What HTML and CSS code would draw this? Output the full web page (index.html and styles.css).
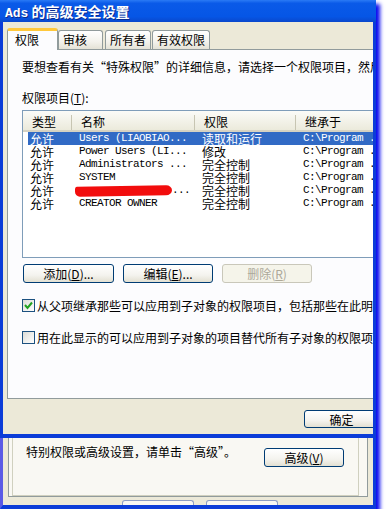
FILE: index.html
```html
<!DOCTYPE html>
<html lang="zh-CN">
<head>
    <meta charset="UTF-8">
    <title>Ads 的高级安全设置</title>
    <link rel="stylesheet" href="styles.css">
</head>
<body>
    <div class="screen">
        <div class="dialog">
            <div class="titlebar"><span class="title-en">Ads</span> 的高级安全设置</div>
            <div class="dialog-body">
                <div class="tabs">
                    <div class="tab active">权限</div>
                    <div class="tab">审核</div>
                    <div class="tab tab-gap2">所有者</div>
                    <div class="tab tab-gap1">有效权限</div>
                </div>
                <div class="panel">
                    <p class="intro">要想查看有关“特殊权限”的详细信息，请选择一个权限项目，然后单击“编辑”。</p>
                    <p class="label">权限项目(<u>T</u>):</p>

                    <div class="listview">
                        <div class="lv-head">
                            <div class="hcell">类型</div>
                            <div class="hcell">名称</div>
                            <div class="hcell">权限</div>
                            <div class="hcell">继承于</div>
                        </div>
                        <div class="lv-row selected">
                            <div class="cell">允许</div>
                            <div class="cell mono">Users (LIAOBIAO...</div>
                            <div class="cell">读取和运行</div>
                            <div class="cell mono">C:\Program ...</div>
                        </div>
                        <div class="lv-row">
                            <div class="cell">允许</div>
                            <div class="cell mono">Power Users (LI...</div>
                            <div class="cell">修改</div>
                            <div class="cell mono">C:\Program ...</div>
                        </div>
                        <div class="lv-row">
                            <div class="cell">允许</div>
                            <div class="cell mono">Administrators ...</div>
                            <div class="cell">完全控制</div>
                            <div class="cell mono">C:\Program ...</div>
                        </div>
                        <div class="lv-row">
                            <div class="cell">允许</div>
                            <div class="cell mono">SYSTEM</div>
                            <div class="cell">完全控制</div>
                            <div class="cell mono">C:\Program ...</div>
                        </div>
                        <div class="lv-row">
                            <div class="cell">允许</div>
                            <div class="cell mono scribbled"><span class="scribble"></span>...</div>
                            <div class="cell">完全控制</div>
                            <div class="cell mono">C:\Program ...</div>
                        </div>
                        <div class="lv-row">
                            <div class="cell">允许</div>
                            <div class="cell mono">CREATOR OWNER</div>
                            <div class="cell">完全控制</div>
                            <div class="cell mono">C:\Program ...</div>
                        </div>
                    </div>

                    <div class="btn-row">
                        <button class="btn">添加(<u>D</u>)...</button>
                        <button class="btn">编辑(<u>E</u>)...</button>
                        <button class="btn" disabled>删除(<u>R</u>)</button>
                    </div>

                    <label class="check first">
                        <span class="box"><svg width="11" height="11" viewBox="0 0 11 11"><polyline points="2,5 4.5,8 9,2.5" fill="none" stroke="#21a121" stroke-width="2"/></svg></span>
                        从父项继承那些可以应用到子对象的权限项目，包括那些在此明确定义的项目。
                    </label>
                    <label class="check second">
                        <span class="box"></span>
                        用在此显示的可以应用到子对象的项目替代所有子对象的权限项目。
                    </label>
                </div>
                <div class="footer">
                    <button class="btn btn-ok">确定</button>
                </div>
            </div>
        </div>

        <div class="under">
            <div class="under-panel">
                <div class="group">
                    <span>特别权限或高级设置，请单击“高级”。</span>
                    <button class="btn btn-adv">高级(<u>V</u>)</button>
                </div>
            </div>
            <div class="under-btns">
                <span></span>
                <span></span>
            </div>
        </div>
    </div>
</body>
</html>
```

FILE: styles.css
```css
body {
    margin: 0;
    background: #fff;
    font-family: "Noto Sans CJK SC", sans-serif;
    font-size: 12px;
    line-height: 14px;
    color: #000;
}
p {
    margin: 0;
}
.screen {
    width: 376px;
    box-shadow: 4px 4px 4px #0a0af0;
}

/* top window */
.titlebar {
    height: 22px;
    padding-left: 5px;
    background: linear-gradient(#2a7af5, #0a5ae8 15%, #0656e6 75%, #0a48cc);
    color: #fff;
    font-weight: bold;
    font-size: 14px;
    line-height: 22px;
    text-shadow: 1px 1px #0a2a90;
    white-space: nowrap;
}
.title-en {
    font-family: "Liberation Mono", monospace;
    font-size: 13px;
}
.dialog-body {
    height: 412px;
    background: #ece9d8;
    border: 3px solid #0b3cd8;
    border-top: 0;
    border-bottom-width: 4px;
    overflow: hidden;
    white-space: nowrap;
}
.tabs {
    display: flex;
    align-items: flex-end;
    height: 27px;
    padding-left: 4px;
}
.tab {
    position: relative;
    box-sizing: border-box;
    height: 19px;
    min-width: 45px;
    padding: 0 4px;
    border: 1px solid #919b9c;
    border-bottom: 0;
    border-radius: 3px 3px 0 0;
    background: linear-gradient(#fff, #f3f2ec 60%, #e4e2d6);
    line-height: 18px;
}
.tab-gap2 {
    margin-left: 2px;
}
.tab-gap1 {
    margin-left: 1px;
}
.tab.active {
    z-index: 1;
    height: 22px;
    min-width: 51px;
    margin-bottom: -1px;
    padding-left: 7px;
    border-top: 3px solid #ffc83c;
    background: #fcfcfe;
    line-height: 18px;
}
.panel {
    box-sizing: border-box;
    width: 440px;
    height: 350px;
    margin-left: 4px;
    padding: 10px 14px 0;
    border: 1px solid #919b9c;
    background: #fcfcfe;
}
.label {
    margin-top: 17px;
}

/* list view */
.listview {
    box-sizing: border-box;
    width: 400px;
    height: 148px;
    margin-top: 5px;
    border: 1px solid #7f9db9;
    background: #fff;
}
.lv-head,
.lv-row {
    display: grid;
    grid-template-columns: 49px 123px 101px 1fr;
}
.lv-head {
    box-sizing: border-box;
    height: 21px;
    padding-top: 4px;
    border-bottom: 2px solid #d6d2c2;
    background: linear-gradient(#fbfbf8, #ebeadb);
}
.hcell {
    padding-left: 9px;
    border-right: 1px solid #c7c5b2;
    line-height: 14px;
}
.lv-row {
    height: 13px;
    line-height: 13px;
}
.cell {
    padding-left: 7px;
}
.lv-row .cell:first-child {
    margin-left: 5px;
    padding-left: 2px;
}
.lv-row.selected {
    background: linear-gradient(90deg, transparent 5px, #316ac5 5px);
    color: #fff;
}
.mono {
    font-family: "Liberation Mono", monospace;
    font-size: 11px;
    letter-spacing: -0.6px;
}
.scribbled {
    display: flex;
    align-items: center;
}
/* red marker stroke hiding a user name */
.scribble {
    flex-shrink: 0;
    width: 97px;
    height: 10px;
    margin: 1px 0 0 -4px;
    border-radius: 2px 6px 6px 5px / 3px 5px 5px 5px;
    background: #f20d0d;
    transform: skewY(-1deg);
}

/* buttons */
.btn {
    box-sizing: border-box;
    height: 19px;
    width: 90px;
    padding: 0;
    border: 1px solid #003c74;
    border-radius: 3px;
    background: linear-gradient(#fff, #f4f3ee 60%, #e3e0d2);
    font: inherit;
    line-height: 16px;
    color: #000;
}
.btn:disabled {
    border-color: #c9c7ba;
    background: #f5f4ea;
    color: #aca899;
}
.btn-row {
    display: flex;
    gap: 9px;
    margin-top: 6px;
    padding-left: 1px;
}
.btn-row .btn:first-child {
    width: 91px;
}

/* checkboxes */
.check {
    display: flex;
    align-items: center;
    gap: 2px;
    height: 13px;
    line-height: 13px;
}
.check.first {
    margin-top: 16px;
}
.check.second {
    margin-top: 19px;
}
.box {
    box-sizing: border-box;
    width: 13px;
    height: 13px;
    flex-shrink: 0;
    border: 1px solid #1c5180;
    background: linear-gradient(135deg, #dcdcd7, #fff);
    display: flex;
    align-items: center;
    justify-content: center;
}

.footer {
    margin-top: 11px;
    padding-left: 301px;
}
.btn-ok {
    width: 75px;
    height: 18px;
    line-height: 15px;
}

/* window underneath */
.under {
    height: 67px;
    background: #ece9d8;
    border: 3px solid #0b3cd8;
    border-top: 0;
    border-bottom-width: 4px;
    border-left-color: #5a5ae6;
    overflow: hidden;
    white-space: nowrap;
}
.under-panel {
    box-sizing: border-box;
    width: 360px;
    height: 59px;
    margin-left: 5px;
    border: 1px solid #919b9c;
    border-top: 0;
    background: #f9f8f3;
}
.group {
    box-sizing: border-box;
    display: flex;
    align-items: flex-start;
    width: 347px;
    height: 58px;
    margin-left: 3px;
    padding: 7px 14px 0 13px;
    border: 1px solid #d0d0bf;
    border-top: 0;
}
.btn-adv {
    width: 80px;
    margin-left: auto;
    margin-top: 3px;
}
.under-btns {
    display: flex;
    gap: 12px;
    padding: 3px 0 0 119px;
}
.under-btns span {
    width: 70px;
    height: 8px;
    border: 1px solid #8c9cc4;
    border-bottom: 0;
    border-radius: 3px 3px 0 0;
    background: #f8f7f2;
}
```
